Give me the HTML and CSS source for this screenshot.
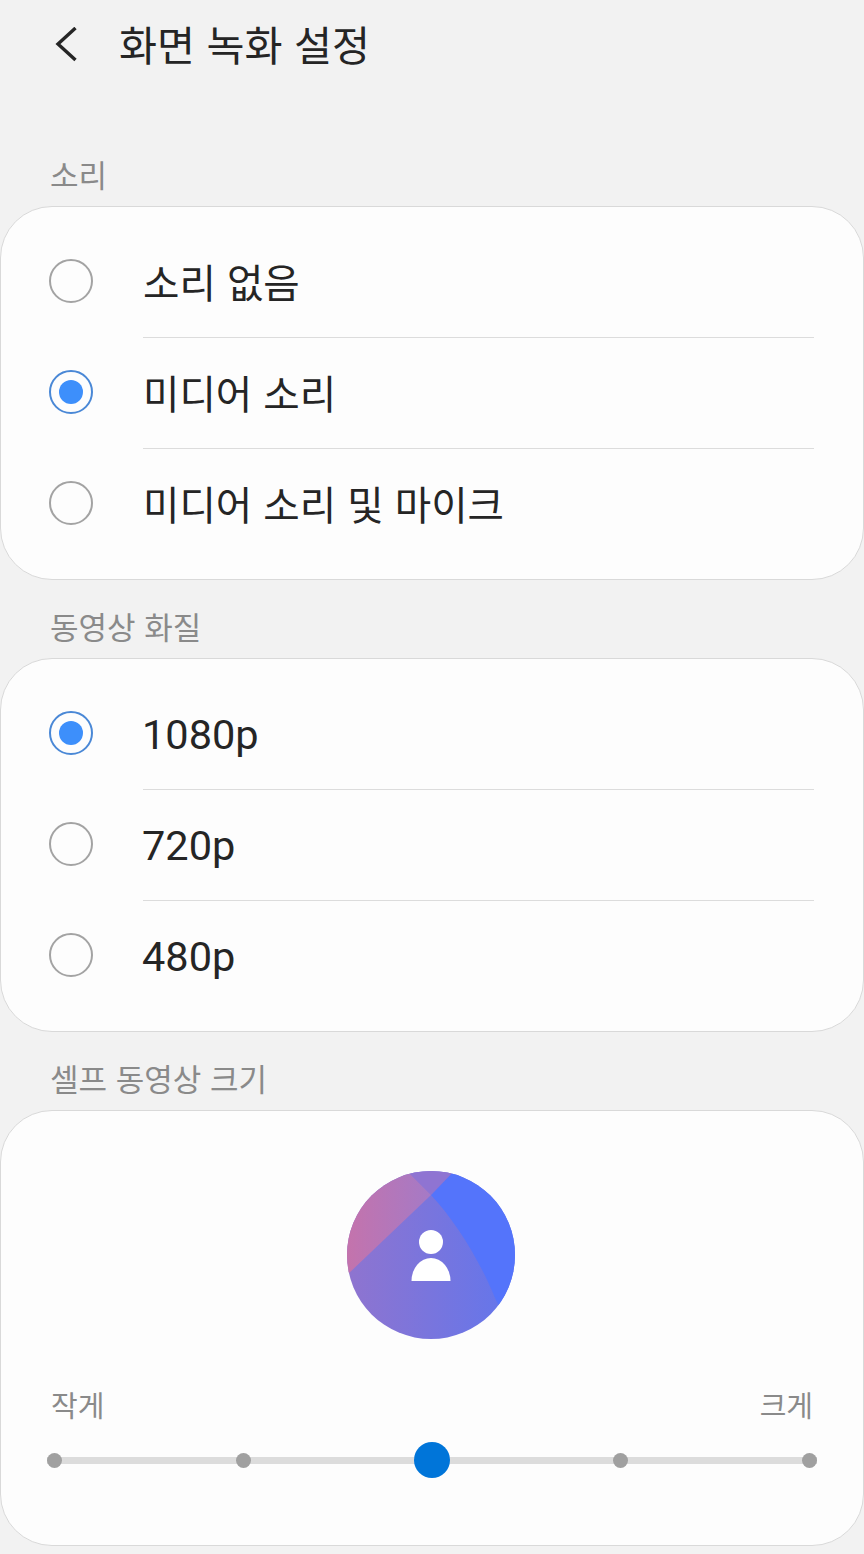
FILE: index.html
```html
<!DOCTYPE html>
<html lang="ko">
<head>
    <meta charset="UTF-8">
    <title>화면 녹화 설정</title>
    <link rel="stylesheet" href="styles.css">
</head>
<body>
    <header class="top-bar">
        <svg class="back-icon" width="24" height="36" viewBox="0 0 24 36">
            <path d="M20.500 1 L3 17 L20.500 33" fill="none"/>
        </svg>
        <h1>화면 녹화 설정</h1>
    </header>

    <h2 class="section-label">소리</h2>
    <section class="card">
        <div class="row">
            <span class="radio"></span>
            <div class="row-text">소리 없음</div>
        </div>
        <div class="row">
            <span class="radio checked"></span>
            <div class="row-text">미디어 소리</div>
        </div>
        <div class="row">
            <span class="radio"></span>
            <div class="row-text">미디어 소리 및 마이크</div>
        </div>
    </section>

    <h2 class="section-label">동영상 화질</h2>
    <section class="card">
        <div class="row">
            <span class="radio checked"></span>
            <div class="row-text latin">1080p</div>
        </div>
        <div class="row">
            <span class="radio"></span>
            <div class="row-text latin">720p</div>
        </div>
        <div class="row">
            <span class="radio"></span>
            <div class="row-text latin">480p</div>
        </div>
    </section>

    <h2 class="section-label">셀프 동영상 크기</h2>
    <section class="card selfie-card">
        <svg class="avatar" width="168" height="168" viewBox="0 0 168 168">
            <defs>
                <linearGradient id="base-grad" x1="0" y1="0" x2="1" y2="0">
                    <stop offset="0" stop-color="#8f74cf"/>
                    <stop offset="1" stop-color="#6276ec"/>
                </linearGradient>
                <linearGradient id="pink-grad" x1="0" y1="0" x2="1" y2="0">
                    <stop offset="0" stop-color="#c473ac"/>
                    <stop offset="1" stop-color="#a57ac6"/>
                </linearGradient>
                <clipPath id="avatar-clip">
                    <circle cx="84" cy="84" r="84"/>
                </clipPath>
            </defs>
            <g clip-path="url(#avatar-clip)">
                <rect width="168" height="168" fill="url(#base-grad)"/>
                <path d="M84 24 L107 0 L168 0 L168 168 L148 127 C134 92 110 52 84 24 Z" fill="#5474fb"/>
                <path d="M84 24 L60 0 L107 0 Z" fill="#8f74d2"/>
                <path d="M0 104 L84 24 L60 0 L0 0 Z" fill="url(#pink-grad)"/>
            </g>
            <circle cx="84" cy="71" r="12" fill="#ffffff"/>
            <path d="M64.500 110 A19.500 23 0 0 1 103.500 110 Z" fill="#ffffff"/>
        </svg>
        <div class="size-labels">
            <span>작게</span>
            <span>크게</span>
        </div>
        <div class="slider">
            <span class="tick"></span>
            <span class="tick"></span>
            <span class="thumb"></span>
            <span class="tick"></span>
            <span class="tick"></span>
        </div>
    </section>
</body>
</html>
```

FILE: styles.css
```css
body {
    background-color: #f2f2f2;
    color: #252525;
    font-family: "Noto Sans CJK KR", Roboto, sans-serif;
    margin: 0;
}

/* Top bar */
.top-bar {
    display: flex;
    align-items: center;
    height: 90px;
    padding-left: 55px;
}

.back-icon path {
    stroke: #252525;
    stroke-width: 3.4;
}

h1 {
    font-size: 41.3px;
    font-weight: 400;
    line-height: 60px;
    margin: 0 0 4px 40px;
}

/* Section labels */
.section-label {
    color: #8a8a8a;
    font-size: 31px;
    font-weight: 400;
    line-height: 44px;
    margin: 0;
    padding: 0 0 10px 50px;
}

.top-bar + .section-label {
    margin-top: 62px;
}

/* Cards */
.card {
    background-color: #fdfdfd;
    border: 1px solid #d9d9d9;
    border-radius: 52px;
    box-sizing: border-box;
    height: 374px;
    margin-bottom: 24px;
    padding: 20px 49px 0 48px;
}

.row {
    display: flex;
    align-items: center;
    height: 111px;
}

.row-text {
    flex-grow: 1;
    align-self: stretch;
    display: flex;
    align-items: center;
    margin-left: 50px;
    padding-bottom: 4px;
    font-size: 39.6px;
    border-bottom: 1px solid #dcdcdc;
    box-sizing: border-box;
}

.row-text.latin {
    font-family: Roboto, sans-serif;
    font-size: 41.5px;
    padding-bottom: 0;
    text-indent: -1px;
}

.row:last-child .row-text {
    border-bottom: none;
}

.radio {
    box-sizing: border-box;
    width: 44px;
    height: 44px;
    flex-shrink: 0;
    border: 2px solid #a3a3a3;
    border-radius: 50%;
    margin-bottom: 3px;
}

.radio.checked {
    border-color: #4a88d6;
    padding: 8px;
}

.radio.checked::before {
    content: "";
    display: block;
    width: 24px;
    height: 24px;
    border-radius: 50%;
    background-color: #3d8ffb;
}

/* Selfie size card */
.selfie-card {
    height: 436px;
    margin-bottom: 0;
    padding: 60px 46px 0;
}

.avatar {
    display: block;
    margin-left: 300px;
}

.size-labels {
    display: flex;
    justify-content: space-between;
    color: #8a8a8a;
    font-size: 29px;
    line-height: 44px;
    margin-top: 43px;
    padding: 0 4px;
}

.slider {
    display: flex;
    justify-content: space-between;
    align-items: center;
    height: 36px;
    margin-top: 16px;
    background: linear-gradient(#dcdcdc, #dcdcdc) center / 100% 7px no-repeat;
}

.tick {
    width: 15px;
    height: 15px;
    border-radius: 50%;
    background-color: #a0a0a0;
}

.thumb {
    width: 36px;
    height: 36px;
    margin: 0 -10.5px;
    border-radius: 50%;
    background-color: #0075d9;
}
```
